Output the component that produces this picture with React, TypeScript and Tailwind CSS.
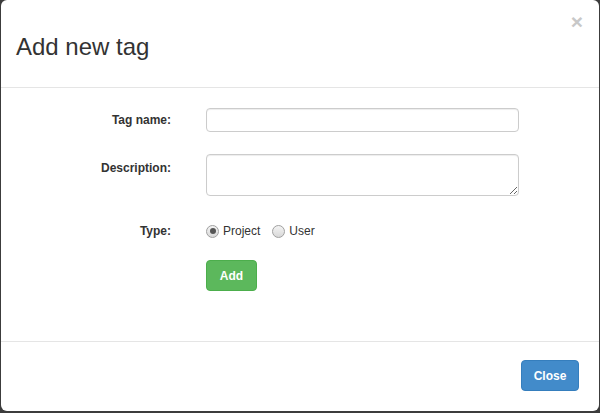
import React from 'react';

const Radio = ({ checked, label }: { checked?: boolean; label: string }) => (
  <label className="flex items-center gap-[4px]">
    <span className="flex h-[13px] w-[13px] items-center justify-center rounded-full border border-[#a0a0a0] bg-gradient-to-b from-[#f4f4f4] to-[#d8d8d8]">
      {checked && <span className="h-[6px] w-[6px] rounded-full bg-[#555]" />}
    </span>
    <span className="text-[12px] text-[#333]">{label}</span>
  </label>
);

export default function App() {
  return (
    <div className="h-[413px] w-[600px] bg-[#3c3c3c] p-[1px] pt-0 pb-[2px] font-['Liberation_Sans',Arial,sans-serif]">
      <div className="flex h-full flex-col rounded-[6px] bg-white">
        <div className="relative h-[88px] border-b border-[#e5e5e5] pl-[15px] pt-[34px]">
          <h4 className="text-[24px] leading-[26px] text-[#333]">Add new tag</h4>
          <button className="absolute right-[16px] top-[11px] text-[21px] font-bold leading-[21px] text-[#c8c8c8]">
            ×
          </button>
        </div>

        <div className="flex-1 pt-[20px]">
          <div className="flex items-center">
            <label className="w-[170px] text-right text-[12px] font-bold text-[#333]">Tag name:</label>
            <input className="ml-[35px] h-[24px] w-[313px] rounded-[4px] border border-[#ccc] shadow-[inset_0_1px_1px_rgba(0,0,0,0.075)] outline-none" />
          </div>
          <div className="mt-[22px] flex items-start">
            <label className="w-[170px] pt-[5px] text-right text-[12px] font-bold text-[#333]">Description:</label>
            <textarea className="ml-[35px] block h-[42px] w-[313px] rounded-[4px] border border-[#ccc] shadow-[inset_0_1px_1px_rgba(0,0,0,0.075)] outline-none" />
          </div>
          <div className="mt-[26px] flex items-center">
            <label className="w-[170px] text-right text-[12px] font-bold text-[#333]">Type:</label>
            <div className="ml-[35px] flex items-center gap-[12px]">
              <Radio checked label="Project" />
              <Radio label="User" />
            </div>
          </div>
          <div className="mt-[20px] pl-[205px]">
            <button className="h-[31px] w-[51px] rounded-[4px] border border-[#4cae4c] bg-[#5cb85c] text-[12px] font-bold text-white">
              Add
            </button>
          </div>
        </div>

        <div className="flex h-[70px] items-start justify-end border-t border-[#e5e5e5] pr-[20px] pt-[18px]">
          <button className="h-[31px] w-[58px] rounded-[4px] border border-[#357ebd] bg-[#428bca] text-[12px] font-bold text-white">
            Close
          </button>
        </div>
      </div>
    </div>
  );
}
